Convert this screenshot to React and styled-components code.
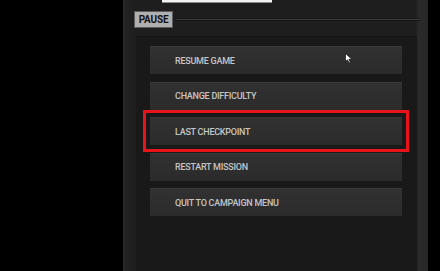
import styled, { createGlobalStyle } from 'styled-components'

const GlobalStyle = createGlobalStyle`
  html, body {
    margin: 0;
    background: #000;
  }
`

const items = [
  'RESUME GAME',
  'CHANGE DIFFICULTY',
  'LAST CHECKPOINT',
  'RESTART MISSION',
  'QUIT TO CAMPAIGN MENU',
]

function Cursor() {
  return (
    <Pointer width="8" height="11" viewBox="0 0 8 11">
      <path d="M0.5 0.5 L0.5 8.5 L2.5 6.8 L4 10 L5.3 9.4 L3.9 6.3 L6.8 6.3 Z" fill="#fff" stroke="#111" strokeWidth="0.7" />
    </Pointer>
  )
}

function App() {
  return (
    <Page>
      <GlobalStyle />
      <Frame>
        <TopField />
        <Header>
          <Tag>PAUSE</Tag>
          <Rule />
        </Header>
        <Inner>
          <Menu>
            {items.map((label, i) => (
              <MenuButton key={label} $active={i === 2}>
                {label}
                {i === 0 && <Cursor />}
              </MenuButton>
            ))}
          </Menu>
        </Inner>
      </Frame>
    </Page>
  )
}

export default App

const Page = styled.div`
  width: 440px;
  height: 271px;
  overflow: hidden;
  display: flex;
  padding-left: 123px;
  box-sizing: border-box;
  background: #000;
  font-family: Roboto, "Liberation Sans", sans-serif;
`

const Frame = styled.div`
  width: 305px;
  height: 100%;
  display: flex;
  flex-direction: column;
  background: linear-gradient(90deg, #2a2a2a 0px, #222 3px, #1e1e1e 12px, #1e1e1e 292px, #2b2b2b 296px, #262626 305px);
  box-sizing: border-box;
`

const TopField = styled.div`
  width: 110px;
  height: 2px;
  margin-left: 39px;
  background: #f2f2f2;
  box-shadow: 0 1px 0 #8a8a8a;
`

const Header = styled.div`
  display: flex;
  align-items: center;
  gap: 3px;
  margin: 9px 8px 0 11px;
  height: 17px;
`

const Tag = styled.div`
  height: 17px;
  width: 39px;
  display: flex;
  align-items: center;
  justify-content: center;
  box-sizing: border-box;
  background: #afafaf;
  border: 1px solid #5c5c5c;
  color: #121212;
  font-size: 10px;
  font-weight: 700;
  letter-spacing: -0.2px;
`

const Rule = styled.div`
  flex: 1;
  height: 1px;
  background: #3d3d3d;
  box-shadow: 0 1px 0 #141414, 0 -1px 0 #181818;
`

const Inner = styled.div`
  flex: 1;
  margin: 8px 11px 0 13px;
  padding: 9px 15px 0 14px;
  background: #191919;
  border-top: 1px solid #151515;
`

const Menu = styled.div`
  display: flex;
  flex-direction: column;
  gap: 7.6px;
`

const MenuButton = styled.div`
  position: relative;
  height: 28px;
  display: flex;
  align-items: center;
  padding-left: 25px;
  box-sizing: border-box;
  background: linear-gradient(180deg, #313131 0%, #2b2b2b 100%);
  border-top: 1px solid #393939;
  color: #c6c6c6;
  font-size: 9px;
  font-weight: 500;
  letter-spacing: -0.25px;
  outline: ${(p) => (p.$active ? '3px solid #e8141a' : 'none')};
  outline-offset: 4px;
`

const Pointer = styled.svg`
  position: absolute;
  left: 195px;
  top: 6px;
`
